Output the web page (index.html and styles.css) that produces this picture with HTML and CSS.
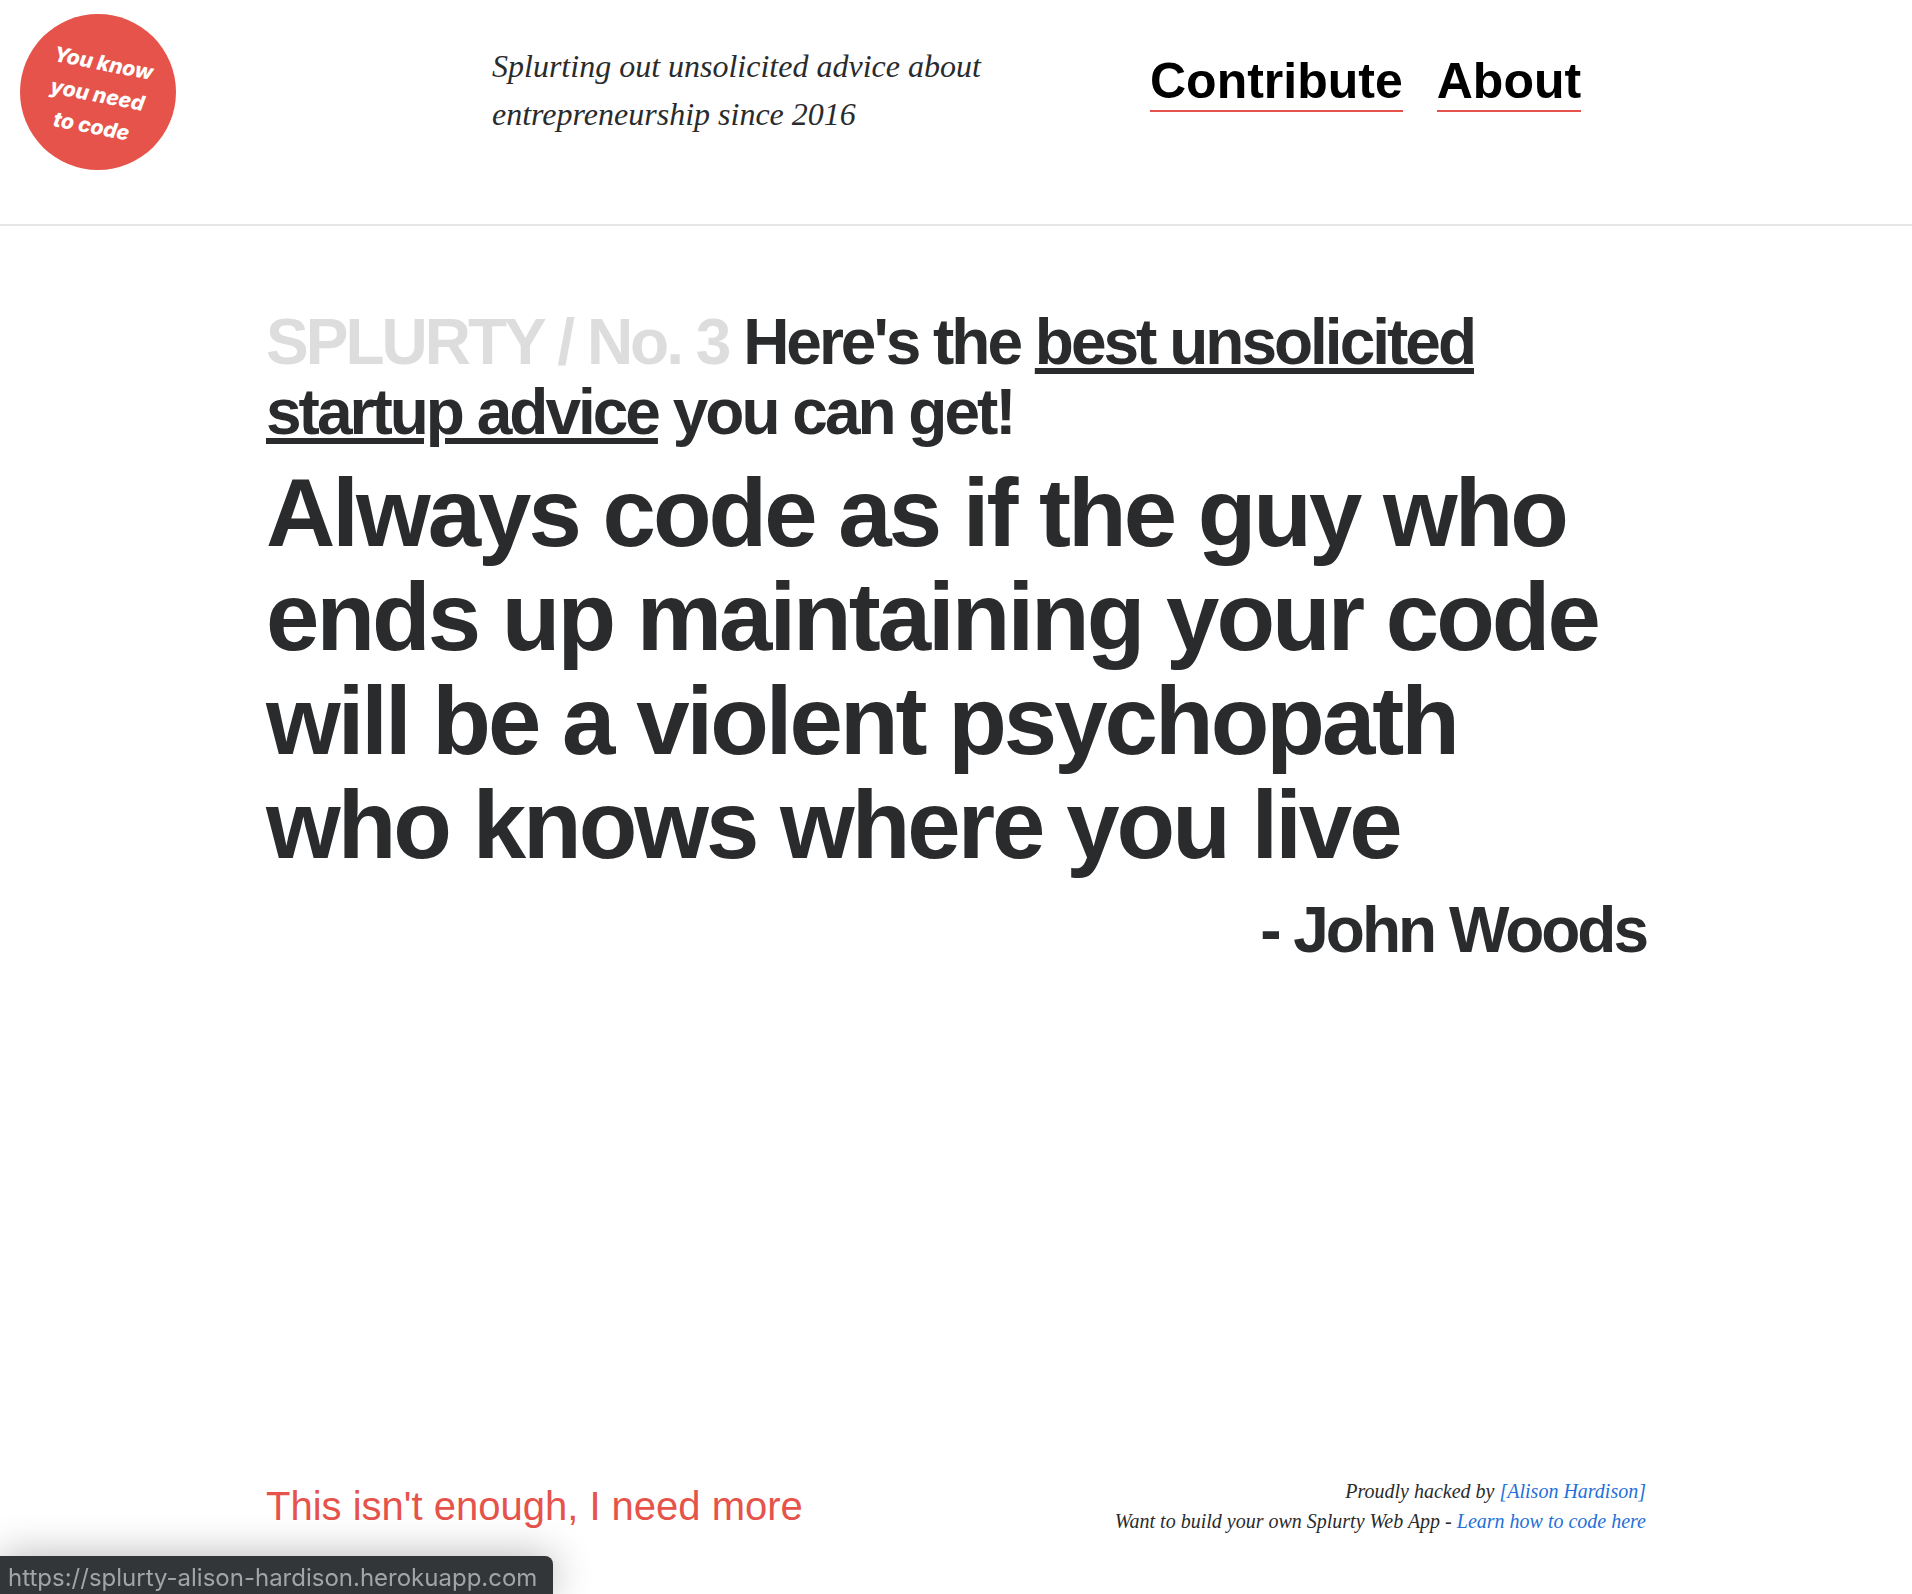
FILE: index.html
```html
<!DOCTYPE html>
<html lang="en">
<head>
<meta charset="utf-8">
<title>Splurty</title>
<link rel="stylesheet" href="styles.css">
</head>
<body>
<header class="site-header">
  <div class="badge"><p class="badge-text">You know<br>you need<br>to code</p></div>
  <p class="tagline">Splurting out unsolicited advice about<br>entrepreneurship since 2016</p>
  <nav class="nav">
    <a class="nav-link" href="#contribute">Contribute</a>
    <a class="nav-link" href="#about">About</a>
  </nav>
</header>
<main class="container">
  <h1 class="display headline"><span class="issue">SPLURTY / No. 3</span> Here's the <u class="marked">best unsolicited startup advice</u> you can get!</h1>
  <blockquote class="display quote">Always code as if the guy who ends up maintaining your code will be a violent psychopath who knows where you live</blockquote>
  <p class="display author">- John Woods</p>
</main>
<footer class="container footer">
  <a class="more" href="#more">This isn't enough, I need more</a>
  <div class="credits">
    <p>Proudly hacked by <a href="#author">[Alison Hardison]</a></p>
    <p>Want to build your own Splurty Web App - <a href="#learn">Learn how to code here</a></p>
  </div>
</footer>
<div class="status">https://splurty-alison-hardison.herokuapp.com</div>
</body>
</html>
```
FILE: styles.css
```css
* { box-sizing: border-box; }

body {
  margin: 0;
  min-height: 100vh;
  display: flex;
  flex-direction: column;
  background: #fff;
  color: #2a2b2c;
  font-family: "Liberation Sans", Arial, sans-serif;
}

p, h1, blockquote { margin: 0; }

.site-header {
  display: grid;
  grid-template-columns: 472fr 658fr 742fr;
  align-items: start;
  padding: 14px 20px 54px;
  border-bottom: 2px solid #e5e5e5;
}

.badge {
  width: 156px;
  height: 156px;
  padding: 6px 2px 0 0;
  display: flex;
  align-items: center;
  justify-content: center;
  border-radius: 50%;
  background: #e5534b;
  color: #fff;
}

.badge-text {
  transform: rotate(11deg);
  text-align: center;
  font: italic 800 21px/32px Inter, sans-serif;
}

.tagline {
  padding-top: 28px;
  font: italic 32px/48px "Palatino", "Palatino Linotype", "Liberation Serif", serif;
}

.nav {
  display: flex;
  gap: 34px;
  padding-top: 38px;
}

.nav-link {
  border-bottom: 2px solid #e5534b;
  color: #000;
  font-size: 50px;
  font-weight: 700;
  line-height: 58px;
  text-decoration: none;
}

.container {
  width: 100%;
  max-width: 1380px;
  margin: 0 auto;
}

main { padding-top: 81px; }

.display {
  font-weight: 700;
  letter-spacing: -3px;
}

.headline {
  font-size: 64px;
  line-height: 70px;
}

.issue { color: #ddd; }

.marked {
  text-decoration-thickness: 6px;
  text-underline-offset: 4px;
}

.quote {
  margin-top: 14px;
  font-size: 96px;
  line-height: 104px;
}

.author {
  margin-top: 18px;
  text-align: right;
  font-size: 64px;
  line-height: 70px;
}

.container.footer {
  display: flex;
  justify-content: space-between;
  align-items: center;
  margin-top: auto;
  padding: 48px 0 58px;
}

.more {
  color: #e5534b;
  font-size: 40px;
  line-height: 48px;
  text-decoration: none;
}

.credits {
  text-align: right;
  font: italic 20px/30px "Palatino", "Palatino Linotype", "Liberation Serif", serif;
}

.credits a {
  color: #1f70d8;
  text-decoration: none;
}

.status {
  position: fixed;
  left: 0;
  bottom: 0;
  padding: 7px 16px 1px 8px;
  border-top-right-radius: 8px;
  background: #333639;
  box-shadow: 0 0 40px rgba(0, 0, 0, 0.3);
  color: #a2a4a5;
  font: 24px/30px Inter, sans-serif;
}
```
